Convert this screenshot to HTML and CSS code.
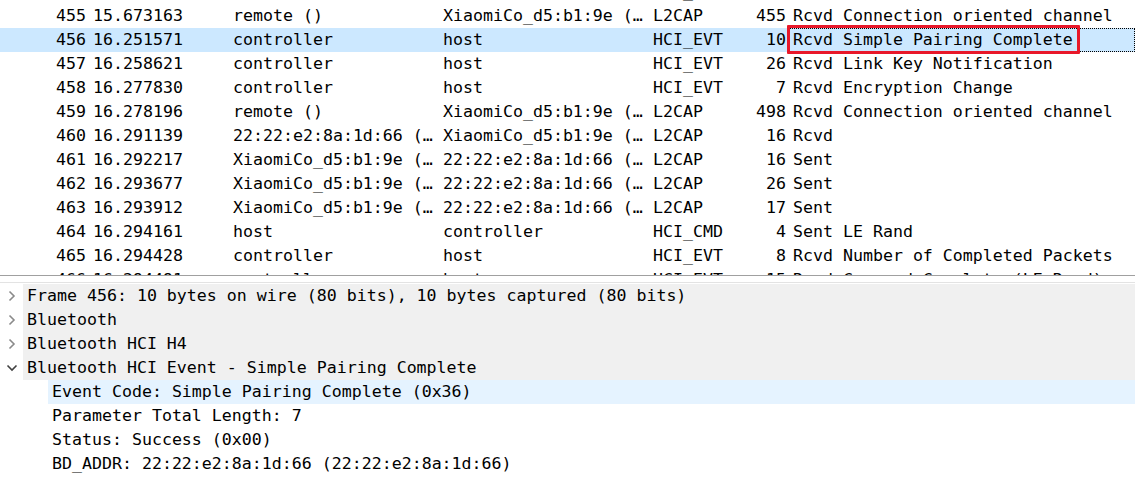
FILE: index.html
```html
<!DOCTYPE html>
<html>
<head>
<meta charset="utf-8">
<link rel="stylesheet" href="styles.css">
</head>
<body>
<div class="app">
  <div class="list">
    <div class="rows">
      <div class="row"><span class="c no">454</span><span class="c tm">15.672901</span><span class="c src">controller</span><span class="c dst">host</span><span class="c pr">HCI_EVT</span><span class="c ln">8</span><span class="c info">Rcvd Number of Completed Packets</span></div>
      <div class="row"><span class="c no">455</span><span class="c tm">15.673163</span><span class="c src">remote ()</span><span class="c dst">XiaomiCo_d5:b1:9e (…</span><span class="c pr">L2CAP</span><span class="c ln">455</span><span class="c info">Rcvd Connection oriented channel</span></div>
      <div class="row sel"><span class="c no">456</span><span class="c tm">16.251571</span><span class="c src">controller</span><span class="c dst">host</span><span class="c pr">HCI_EVT</span><span class="c ln">10</span><span class="c info focus">Rcvd Simple Pairing Complete<span class="mark"></span></span></div>
      <div class="row"><span class="c no">457</span><span class="c tm">16.258621</span><span class="c src">controller</span><span class="c dst">host</span><span class="c pr">HCI_EVT</span><span class="c ln">26</span><span class="c info">Rcvd Link Key Notification</span></div>
      <div class="row"><span class="c no">458</span><span class="c tm">16.277830</span><span class="c src">controller</span><span class="c dst">host</span><span class="c pr">HCI_EVT</span><span class="c ln">7</span><span class="c info">Rcvd Encryption Change</span></div>
      <div class="row"><span class="c no">459</span><span class="c tm">16.278196</span><span class="c src">remote ()</span><span class="c dst">XiaomiCo_d5:b1:9e (…</span><span class="c pr">L2CAP</span><span class="c ln">498</span><span class="c info">Rcvd Connection oriented channel</span></div>
      <div class="row"><span class="c no">460</span><span class="c tm">16.291139</span><span class="c src">22:22:e2:8a:1d:66 (…</span><span class="c dst">XiaomiCo_d5:b1:9e (…</span><span class="c pr">L2CAP</span><span class="c ln">16</span><span class="c info">Rcvd</span></div>
      <div class="row"><span class="c no">461</span><span class="c tm">16.292217</span><span class="c src">XiaomiCo_d5:b1:9e (…</span><span class="c dst">22:22:e2:8a:1d:66 (…</span><span class="c pr">L2CAP</span><span class="c ln">16</span><span class="c info">Sent</span></div>
      <div class="row"><span class="c no">462</span><span class="c tm">16.293677</span><span class="c src">XiaomiCo_d5:b1:9e (…</span><span class="c dst">22:22:e2:8a:1d:66 (…</span><span class="c pr">L2CAP</span><span class="c ln">26</span><span class="c info">Sent</span></div>
      <div class="row"><span class="c no">463</span><span class="c tm">16.293912</span><span class="c src">XiaomiCo_d5:b1:9e (…</span><span class="c dst">22:22:e2:8a:1d:66 (…</span><span class="c pr">L2CAP</span><span class="c ln">17</span><span class="c info">Sent</span></div>
      <div class="row"><span class="c no">464</span><span class="c tm">16.294161</span><span class="c src">host</span><span class="c dst">controller</span><span class="c pr">HCI_CMD</span><span class="c ln">4</span><span class="c info">Sent LE Rand</span></div>
      <div class="row"><span class="c no">465</span><span class="c tm">16.294428</span><span class="c src">controller</span><span class="c dst">host</span><span class="c pr">HCI_EVT</span><span class="c ln">8</span><span class="c info">Rcvd Number of Completed Packets</span></div>
      <div class="row"><span class="c no">466</span><span class="c tm">16.294491</span><span class="c src">controller</span><span class="c dst">host</span><span class="c pr">HCI_EVT</span><span class="c ln">15</span><span class="c info">Rcvd Command Complete (LE Rand)</span></div>
    </div>
  </div>
  <div class="splitter"></div>
  <div class="tree">
    <div class="node lvl0 shade"><span class="arrow"><svg width="10" height="12" viewBox="0 0 10 12"><path d="M2.5 1.5 L7 6 L2.5 10.5" fill="none" stroke="#8a8a8a" stroke-width="1.6"/></svg></span><span class="label">Frame 456: 10 bytes on wire (80 bits), 10 bytes captured (80 bits)</span></div>
    <div class="node lvl0 shade"><span class="arrow"><svg width="10" height="12" viewBox="0 0 10 12"><path d="M2.5 1.5 L7 6 L2.5 10.5" fill="none" stroke="#8a8a8a" stroke-width="1.6"/></svg></span><span class="label">Bluetooth</span></div>
    <div class="node lvl0 shade"><span class="arrow"><svg width="10" height="12" viewBox="0 0 10 12"><path d="M2.5 1.5 L7 6 L2.5 10.5" fill="none" stroke="#8a8a8a" stroke-width="1.6"/></svg></span><span class="label">Bluetooth HCI H4</span></div>
    <div class="node lvl0 shade"><span class="arrow"><svg width="12" height="10" viewBox="0 0 12 10"><path d="M1.5 2.5 L6 7 L10.5 2.5" fill="none" stroke="#404040" stroke-width="1.6"/></svg></span><span class="label">Bluetooth HCI Event - Simple Pairing Complete</span></div>
    <div class="node lvl1 hl"><span class="label">Event Code: Simple Pairing Complete (0x36)</span></div>
    <div class="node lvl1"><span class="label">Parameter Total Length: 7</span></div>
    <div class="node lvl1"><span class="label">Status: Success (0x00)</span></div>
    <div class="node lvl1"><span class="label">BD_ADDR: 22:22:e2:8a:1d:66 (22:22:e2:8a:1d:66)</span></div>
  </div>
</div>
</body>
</html>
```
FILE: styles.css
```css
html, body {
  margin: 0;
  padding: 0;
  background: #ffffff;
}
body {
  font-family: "DejaVu Sans Mono", "Liberation Mono", monospace;
  font-size: 16.6px;
  color: #000000;
  width: 1135px;
  height: 495px;
  overflow: hidden;
}
.app {
  display: flex;
  flex-direction: column;
}
.list {
  height: 275px;
  overflow: hidden;
  border-bottom: 1px solid #a0a0a0;
}
.rows {
  margin-top: -20px;
  display: flex;
  flex-direction: column;
}
.row {
  display: grid;
  grid-template-columns: 89px 140px 210px 210px 81px 59px 1fr;
  height: 24px;
  line-height: 24px;
  white-space: nowrap;
}
.row.sel {
  background: #cce8ff;
}
.c {
  padding-left: 4px;
  padding-right: 3px;
  overflow: hidden;
  position: relative;
}
.no, .ln {
  text-align: right;
}
.info.focus {
  overflow: visible;
  border: 1px dotted #000000;
  line-height: 22px;
  padding-left: 3px;
}
.mark {
  position: absolute;
  left: -3px;
  top: -4px;
  width: 293px;
  height: 29px;
  box-sizing: border-box;
  border: 3px solid #e8182a;
  border-radius: 1px;
}
.splitter {
  height: 6px;
  background: #ffffff;
  border-bottom: 1px solid #e3e3e3;
}
.tree {
  display: flex;
  flex-direction: column;
  padding-top: 1px;
}
.node {
  height: 24px;
  line-height: 24px;
  display: flex;
  align-items: center;
  white-space: nowrap;
}
.arrow {
  width: 23px;
  height: 24px;
  display: flex;
  align-items: center;
  justify-content: center;
  background: #ffffff;
  flex: none;
}
.label {
  flex: 1;
  height: 24px;
  padding-left: 4px;
}
.lvl1 {
  padding-left: 48px;
}
.shade .label {
  background: #f0f0f0;
}
.hl .label {
  background: #e5f3ff;
}
```
